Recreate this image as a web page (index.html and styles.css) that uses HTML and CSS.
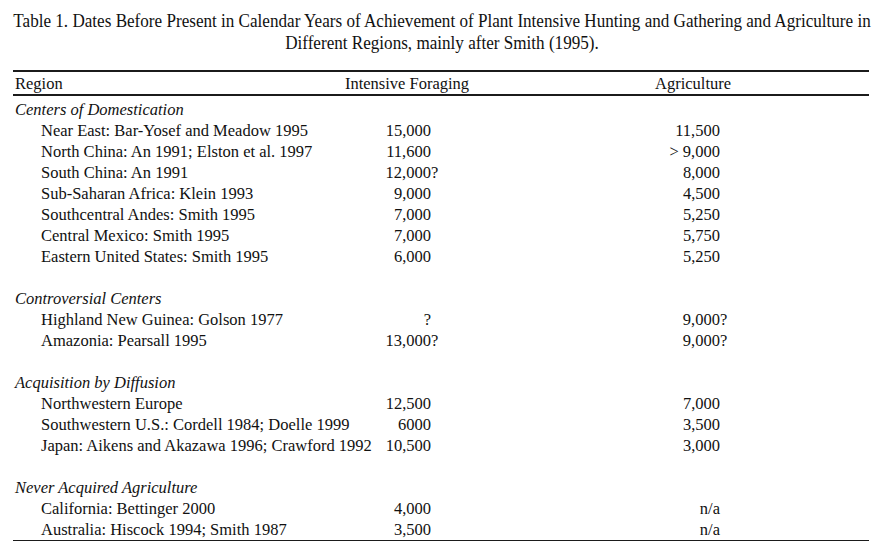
FILE: index.html
```html
<!DOCTYPE html>
<html>
<head>
<meta charset="utf-8">
<link rel="stylesheet" href="styles.css">
</head>
<body>
<div class="page">
  <div class="caption">
    <div class="cap-line">Table 1. Dates Before Present in Calendar Years of Achievement of Plant Intensive Hunting and Gathering and Agriculture in</div>
    <div class="cap-line">Different Regions, mainly after Smith (1995).</div>
  </div>

  <div class="table">
    <div class="head">
      <div class="h-region">Region</div>
      <div class="h-forage">Intensive Foraging</div>
      <div class="h-agri">Agriculture</div>
    </div>

    <div class="body">
      <div class="row group"><div class="label">Centers of Domestication</div></div>
      <div class="row"><div class="label">Near East: Bar-Yosef and Meadow 1995</div><div class="num">15,000</div><div class="num">11,500</div></div>
      <div class="row"><div class="label">North China: An 1991; Elston et al. 1997</div><div class="num">11,600</div><div class="num">&gt; 9,000</div></div>
      <div class="row"><div class="label">South China: An 1991</div><div class="num">12,000<span class="q">?</span></div><div class="num">8,000</div></div>
      <div class="row"><div class="label">Sub-Saharan Africa: Klein 1993</div><div class="num">9,000</div><div class="num">4,500</div></div>
      <div class="row"><div class="label">Southcentral Andes: Smith 1995</div><div class="num">7,000</div><div class="num">5,250</div></div>
      <div class="row"><div class="label">Central Mexico: Smith 1995</div><div class="num">7,000</div><div class="num">5,750</div></div>
      <div class="row"><div class="label">Eastern United States: Smith 1995</div><div class="num">6,000</div><div class="num">5,250</div></div>
      <div class="row blank"></div>

      <div class="row group"><div class="label">Controversial Centers</div></div>
      <div class="row"><div class="label">Highland New Guinea: Golson 1977</div><div class="num">?</div><div class="num">9,000<span class="q">?</span></div></div>
      <div class="row"><div class="label">Amazonia: Pearsall 1995</div><div class="num">13,000<span class="q">?</span></div><div class="num">9,000<span class="q">?</span></div></div>
      <div class="row blank"></div>

      <div class="row group"><div class="label">Acquisition by Diffusion</div></div>
      <div class="row"><div class="label">Northwestern Europe</div><div class="num">12,500</div><div class="num">7,000</div></div>
      <div class="row"><div class="label">Southwestern U.S.: Cordell 1984; Doelle 1999</div><div class="num">6000</div><div class="num">3,500</div></div>
      <div class="row"><div class="label">Japan: Aikens and Akazawa 1996; Crawford 1992</div><div class="num">10,500</div><div class="num">3,000</div></div>
      <div class="row blank"></div>

      <div class="row group"><div class="label">Never Acquired Agriculture</div></div>
      <div class="row"><div class="label">California: Bettinger 2000</div><div class="num">4,000</div><div class="num">n/a</div></div>
      <div class="row"><div class="label">Australia: Hiscock 1994; Smith 1987</div><div class="num">3,500</div><div class="num">n/a</div></div>
    </div>
  </div>
</div>
</body>
</html>
```

FILE: styles.css
```css
html, body {
  margin: 0;
  padding: 0;
  background: #ffffff;
}

body {
  font-family: "Liberation Serif", "Times New Roman", serif;
  color: #111111;
  width: 884px;
  height: 551px;
  overflow: hidden;
}

.page {
  padding-top: 10px;
}

.caption {
  display: flex;
  flex-direction: column;
  align-items: center;
  font-size: 18px;
  line-height: 22px;
  transform: scaleX(0.95);
  transform-origin: 442px 0;
}

.cap-line {
  white-space: nowrap;
}

.table {
  margin: 16px 15px 0 13px;
  border-top: 2px solid #1b1b1b;
  border-bottom: 1.5px solid #1b1b1b;
  font-size: 16.5px;
  line-height: 21px;
}

.head {
  display: grid;
  grid-template-columns: 330px 128px 1fr;
  padding-top: 2px;
  line-height: 20px;
  border-bottom: 2px solid #1b1b1b;
  margin-bottom: 3px;
}

.h-region {
  padding-left: 2px;
}

.h-forage {
  text-align: center;
}

.h-agri {
  padding-left: 184px;
}

.row {
  display: grid;
  grid-template-columns: 372px 46px 289px;
  height: 21px;
  white-space: nowrap;
}

.row .label {
  padding-left: 28px;
}

.row.group .label {
  padding-left: 2px;
  font-style: italic;
}

.num {
  text-align: right;
}

.q {
  margin-right: -0.44em;
}
```
